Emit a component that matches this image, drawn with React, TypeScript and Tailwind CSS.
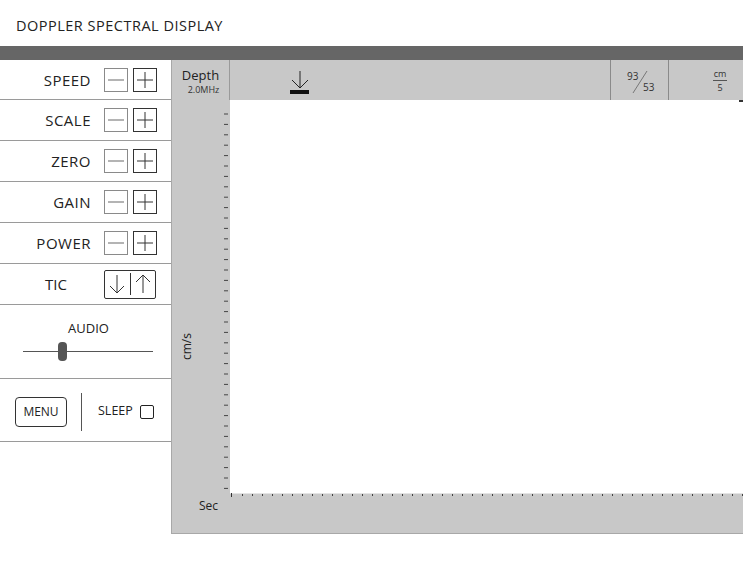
import React from "react";

const font = { fontFamily: '"Open Sans", "Noto Sans", sans-serif' };

function MinusPlus() {
  return (
    <div className="flex gap-[5px]">
      <div className="w-[24px] h-[24px] border border-[#8a8a8a] flex items-center justify-center">
        <div className="w-[16px] h-[2px] bg-[#b4b4b4]" />
      </div>
      <div className="w-[24px] h-[24px] border border-[#333] flex items-center justify-center">
        <svg width="18" height="18" viewBox="0 0 18 18">
          <path d="M9 1V17M1 9H17" stroke="#333" strokeWidth="1" />
        </svg>
      </div>
    </div>
  );
}

function Row({ label, h = 41 }: { label: string; h?: number }) {
  return (
    <div
      className={
        (h === 40 ? "h-[40px]" : "h-[41px]") + " border-b border-[#9a9a9a] flex items-center"
      }
    >
      <div className="w-[91px] text-right text-[15px] text-[#222] tracking-[0.5px] pt-[1px]">{label}</div>
      <div className="ml-[13px]">
        <MinusPlus />
      </div>
    </div>
  );
}

export default function App() {
  const yTicks = Array.from({ length: 37 }, (_, i) => 114 + i * 10.4);
  const xTicks = Array.from({ length: 52 }, (_, i) => 2 + i * 10);
  return (
    <div className="w-[743px] h-[582px] overflow-hidden bg-white relative" style={font}>
      <div className="h-[46px] flex items-center pl-[16px] pt-[5px] text-[14.5px] text-[#222] tracking-[0.5px]">
        DOPPLER SPECTRAL DISPLAY
      </div>
      <div className="h-[14px] bg-[#666666]" />
      <div className="flex">
        {/* left panel */}
        <div className="w-[171px] shrink-0">
          <Row label="SPEED" h={40} />
          <Row label="SCALE" />
          <Row label="ZERO" />
          <Row label="GAIN" />
          <Row label="POWER" />
          <div className="h-[41px] border-b border-[#9a9a9a] flex items-center">
            <div className="w-[67px] text-right text-[15px] text-[#222]">TIC</div>
            <div className="ml-[37px] w-[52px] h-[29px] border border-[#333] rounded-[2px] flex items-center">
              <div className="flex-1 flex justify-center">
                <svg width="16" height="22" viewBox="0 0 16 22">
                  <path d="M8 2V20M1 13L8 20L15 13" stroke="#333" strokeWidth="1" fill="none" />
                </svg>
              </div>
              <div className="w-px h-[22px] bg-[#333]" />
              <div className="flex-1 flex justify-center">
                <svg width="16" height="22" viewBox="0 0 16 22">
                  <path d="M8 20V2M1 9L8 2L15 9" stroke="#333" strokeWidth="1" fill="none" />
                </svg>
              </div>
            </div>
          </div>
          <div className="h-[74px] border-b border-[#9a9a9a] flex flex-col items-center pt-[14px]">
            <div className="text-[13px] text-[#222] ml-[6px]">AUDIO</div>
            <div className="relative w-[130px] h-[20px] mt-[3px] ml-[5px]">
              <div className="absolute left-0 right-0 top-[9px] h-px bg-[#555]" />
              <div className="absolute left-[35px] top-0 w-[9px] h-[19px] rounded-[4px] bg-[#555]" />
            </div>
          </div>
          <div className="h-[63px] border-b border-[#9a9a9a] flex items-center pt-[3px]">
            <div className="ml-[15px] w-[52px] h-[30px] border border-[#333] rounded-[4px] flex items-center justify-center text-[12px] text-[#222]">
              MENU
            </div>
            <div className="ml-[14px] w-px h-[38px] bg-[#555]" />
            <div className="ml-[16px] text-[12.5px] text-[#222]">SLEEP</div>
            <div className="ml-[7px] w-[14px] h-[14px] border border-[#222] rounded-[2px]" />
          </div>
        </div>

        {/* display panel */}
        <div className="w-[600px] shrink-0 h-[474px] bg-[#c8c8c8] border-l border-b border-[#a8a8a8] flex flex-col">
          <div className="h-[40px] flex">
            <div className="w-[58px] border-r border-[#9a9a9a] flex flex-col items-center justify-center leading-none pt-[2px]">
              <div className="text-[13px] text-[#222]">Depth</div>
              <div className="text-[9px] text-[#333] ml-[6px] mt-[3px]">2.0MHz</div>
            </div>
            <div className="w-[380px] relative">
              <svg className="absolute left-[60px] top-[10px]" width="20" height="20" viewBox="0 0 20 20">
                <path d="M10 1V18M2 10L10 18L18 10" stroke="#222" strokeWidth="1" fill="none" />
              </svg>
              <div className="absolute left-[60px] top-[30px] w-[19px] h-[4px] bg-[#111]" />
            </div>
            <div className="w-[59px] border-l border-r border-[#8a8a8a] relative text-[10px] text-[#333]">
              <span className="absolute left-[16px] top-[9px]">93</span>
              <svg className="absolute left-[20px] top-[10px]" width="18" height="24" viewBox="0 0 18 24">
                <path d="M16 1L2 23" stroke="#777" strokeWidth="1" />
              </svg>
              <span className="absolute left-[32px] top-[20px]">53</span>
            </div>
            <div className="flex-1 flex flex-col items-center justify-center text-[9px] text-[#333] leading-none">
              <div className="pb-[2px] border-b border-[#555] px-[1px]">cm</div>
              <div className="pt-[2px]">5</div>
            </div>
          </div>
          <div className="flex-1 flex">
            <div className="w-[58px] relative">
              <div className="absolute left-[6px] top-[260px] -rotate-90 origin-top-left text-[12px] text-[#222]">
                cm/s
              </div>
              <svg className="absolute right-0 top-0" width="8" height="394" viewBox="0 0 8 394">
                {yTicks.map((y, i) => (
                  <line key={i} x1="2" x2="6" y1={y - 100} y2={y - 100} stroke="#444" strokeWidth="1" />
                ))}
              </svg>
            </div>
            <div className="flex-1 bg-white relative">
              <div className="absolute right-[28px] top-0 w-[4px] h-[2px] bg-[#333]" />
            </div>
          </div>
          <div className="h-[40px] flex">
            <div className="w-[58px] relative">
              <div className="absolute left-[27px] top-[4px] text-[12px] text-[#222]">Sec</div>
            </div>
            <div className="flex-1 relative">
              <svg className="absolute left-0 top-0" width="542" height="8" viewBox="0 0 542 8">
                <line x1="0" x2="542" y1="0.5" y2="0.5" stroke="#e4e4e4" strokeWidth="1" />
                <line x1="1.5" x2="1.5" y1="-1" y2="4" stroke="#333" strokeWidth="1" />
                {xTicks.map((x, i) => (
                  <line key={i} x1={x + 10.5} x2={x + 10.5} y1="1" y2="3" stroke="#444" strokeWidth="1" />
                ))}
              </svg>
            </div>
          </div>
        </div>
      </div>
    </div>
  );
}
